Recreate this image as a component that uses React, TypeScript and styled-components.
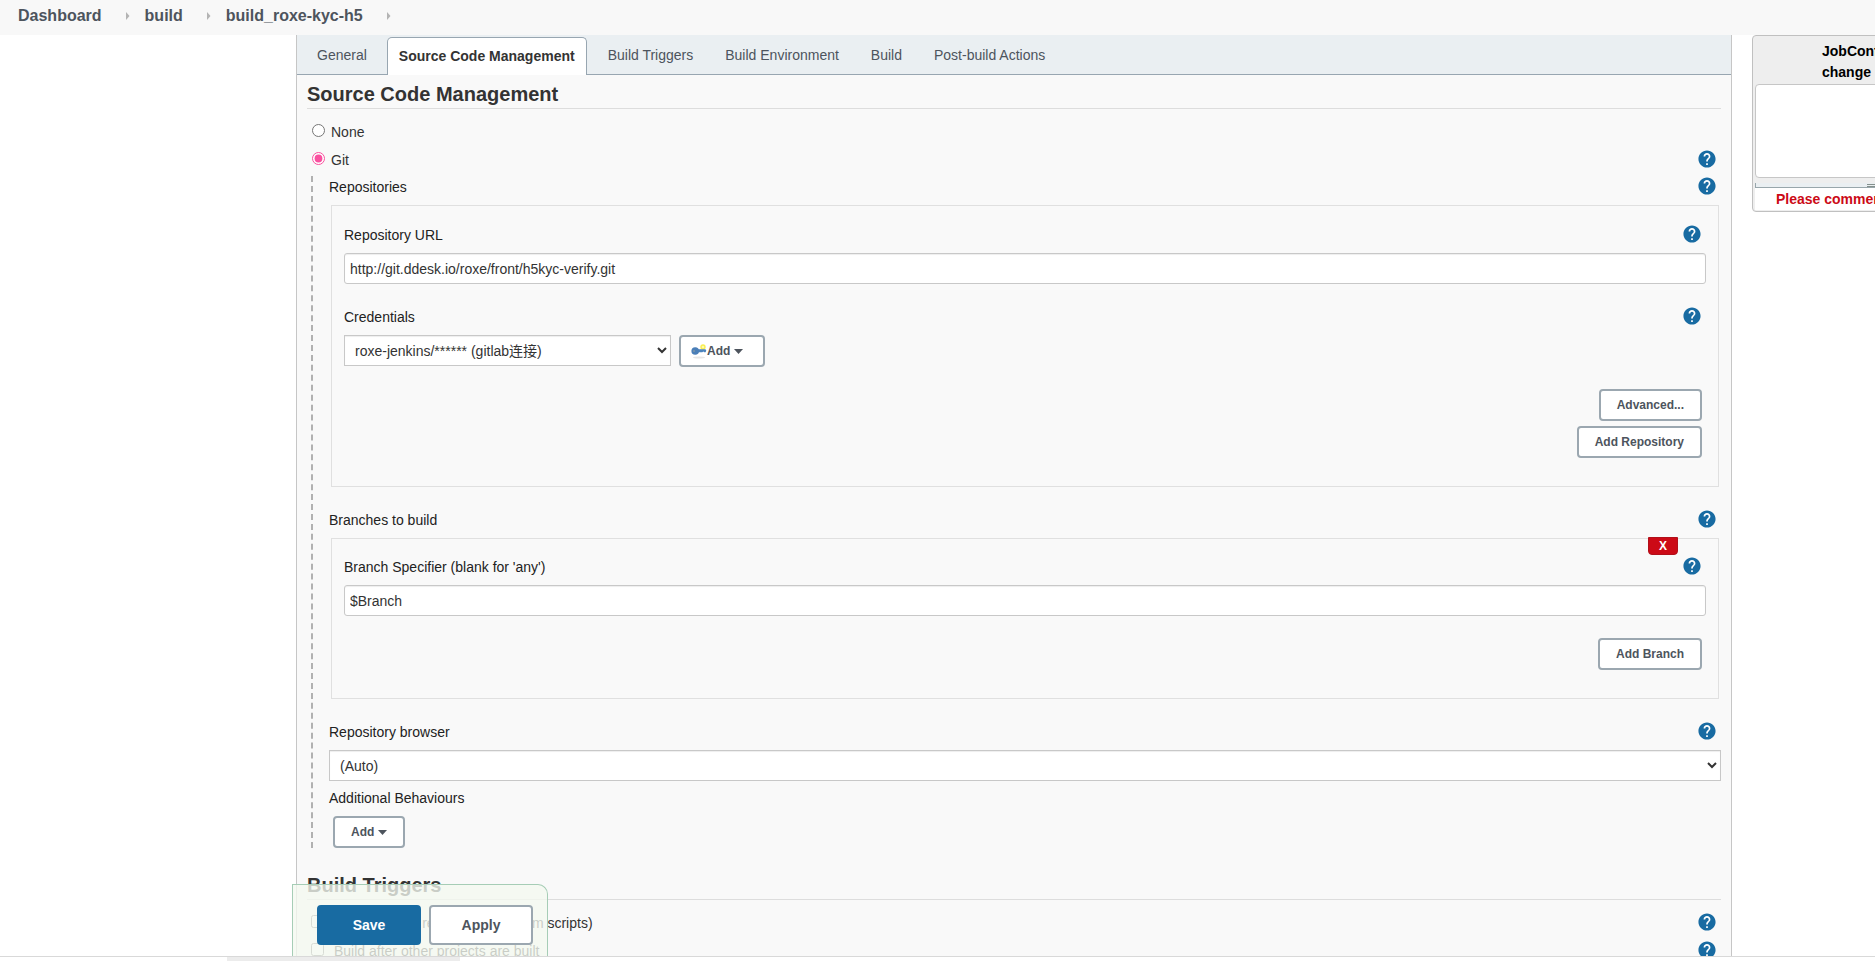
import React from "react";
import styled, { createGlobalStyle } from "styled-components";

const GlobalStyle = createGlobalStyle`
  * { box-sizing: border-box; }
  body {
    margin: 0;
    background: #fff;
    color: #333;
    font: 14px/22px "Liberation Sans", Arial, "Noto Sans CJK SC", sans-serif;
  }
  button, input, select, textarea { font: inherit; color: inherit; margin: 0; }
`;

const Page = styled.div`
  display: flex;
  flex-direction: column;
  height: 100vh;
  overflow: hidden;
`;

const Breadcrumbs = styled.nav`
  display: flex;
  align-items: center;
  flex: none;
  height: 35px;
  padding: 0 18px 4px;
  background: #f8f8f8;
`;

const Crumb = styled.a`
  color: #4d545d;
  font-size: 16px;
  font-weight: bold;
  text-decoration: none;
`;

const CrumbArrow = styled.svg`
  width: 5px;
  height: 8px;
  margin: 0 15px 0 23px;
  fill: #b4b4b4;
`;

const Main = styled.main`
  position: relative;
  display: grid;
  grid-template-columns: 296px minmax(0, 1fr) 143px;
  flex: 1;
  min-height: 0;
  overflow: hidden;
`;

const Panel = styled.form`
  grid-column: 2;
  border: solid #c6c6c6;
  border-width: 0 1px;
  background: #f9f9f9;
`;

const Tabs = styled.div`
  display: flex;
  height: 40px;
  padding: 2px 4px 0;
  border-bottom: 1px solid #98a6b1;
  background: #eaeff2;
`;

const Tab = styled.button<{ $active?: boolean }>`
  height: ${(p) => (p.$active ? 38 : 37)}px;
  margin: ${(p) => (p.$active ? "0 5px 0 4px" : "0")};
  padding: ${(p) => (p.$active ? "0 11px 2px" : "0 16px 2px")};
  border: ${(p) => (p.$active ? "1px solid #98a6b1" : "0")};
  border-bottom: 0;
  border-radius: 5px 5px 0 0;
  background: ${(p) => (p.$active ? "#fff" : "transparent")};
  color: ${(p) => (p.$active ? "#333" : "#4d545d")};
  font-weight: ${(p) => (p.$active ? "bold" : "normal")};
  white-space: nowrap;
`;

const Content = styled.div`
  padding: 0 10px;
`;

const SectionTitle = styled.h2`
  margin: 0 0 9px;
  padding-top: 6px;
  border-bottom: 1px solid #ddd;
  font-size: 20px;
  line-height: 27px;
`;

const OptionRow = styled.div`
  display: flex;
  align-items: center;
  justify-content: space-between;
  height: 28px;
  padding: 0 5px 0 4px;
`;

const OptionLabel = styled.label<{ $radio?: boolean }>`
  display: flex;
  align-items: center;
  gap: ${(p) => (p.$radio ? 6 : 10)}px;
  padding-left: ${(p) => (p.$radio ? 1 : 0)}px;
`;

const Choice = styled.input`
  width: 13px;
  height: 13px;
  margin-bottom: 3px;
  accent-color: #f9509f;
`;

const Nested = styled.div`
  margin: 2px 0 18px 4px;
  padding-left: 16px;
  border-left: 2px dashed #b1b1b1;
`;

const LabelRow = styled.div`
  display: flex;
  justify-content: space-between;
  height: 22px;
  margin-bottom: 7px;
  padding-right: 5px;
`;

const FieldLabel = styled.label`
  color: #222;
`;

const HelpButton = styled.button`
  display: block;
  width: 18px;
  height: 18px;
  margin: 1px 0 3px;
  padding: 0;
  border: 0;
  background: none;
  color: #186ba2;
`;

const Group = styled.section<{ $top: number }>`
  position: relative;
  margin: 0 2px 22px;
  padding: ${(p) => p.$top}px 12px 28px;
  border: 1px solid #e0e0e0;
`;

const Field = styled.div`
  margin-bottom: 22px;
`;

const TextInput = styled.input`
  display: block;
  width: 100%;
  height: 31px;
  padding: 0 5px;
  border: 1px solid #c8c8c8;
  border-radius: 3px;
  background: #fff;
  box-shadow: inset 0 1px 1px #eee;
`;

const Select = styled.select<{ $width: string }>`
  width: ${(p) => p.$width};
  height: 31px;
  padding: 0 0 0 6px;
  border: 1px solid #c8c8c8;
  border-radius: 0;
  background: #fff;
  box-shadow: inset 0 1px 1px #eee;
`;

const Inline = styled.div`
  display: flex;
  gap: 8px;
`;

const Actions = styled.div`
  display: flex;
  flex-direction: column;
  align-items: flex-end;
  gap: 5px;
  padding-right: 4px;
`;

const Button = styled.button<{ $withIcon?: boolean }>`
  display: inline-flex;
  align-items: center;
  height: 32px;
  padding: ${(p) => (p.$withIcon ? "0 20px 0 10px" : "0 16px")};
  border: 2px solid #9ba7b0;
  border-radius: 4px;
  background: #fff;
  color: #4d545d;
  font-size: 12px;
  font-weight: bold;
`;

const Behaviours = styled.div`
  margin-top: 6px;
`;

const BehaviourAction = styled.div`
  display: flex;
  padding-left: 4px;
`;

const Caret = styled.svg`
  width: 9px;
  height: 5px;
  margin-left: 4px;
  fill: currentColor;
`;

const KeyIcon = styled.svg`
  width: 16px;
  height: 16px;
`;

const DeleteButton = styled.button`
  position: absolute;
  top: -2px;
  right: 40px;
  width: 30px;
  height: 18px;
  padding: 0;
  border: 1px solid #b1101a;
  border-radius: 0 0 4px 4px;
  background: #cc0a16;
  color: #fff;
  font-size: 12px;
  font-weight: bold;
  line-height: 16px;
`;

const SaveBar = styled.div`
  position: absolute;
  bottom: 0;
  left: 292px;
  display: flex;
  gap: 8px;
  padding: 20px 14px 11px 24px;
  border: 1px solid #a6cdb6;
  border-bottom: 0;
  border-radius: 0 10px 0 0;
  background: rgba(244, 248, 240, 0.78);
`;

const FormButton = styled.button<{ $primary?: boolean }>`
  width: 104px;
  height: 40px;
  border: 2px solid ${(p) => (p.$primary ? "#186ba2" : "#9ba7b0")};
  border-radius: 4px;
  background: ${(p) => (p.$primary ? "#186ba2" : "#fff")};
  color: ${(p) => (p.$primary ? "#fff" : "#4d545d")};
  font-weight: bold;
`;

const HistoryBox = styled.aside`
  width: 260px;
  height: 177px;
  margin-left: 20px;
  padding: 5px 2px 2px;
  border: 1px solid #c0c0c0;
  border-radius: 4px;
  background: #eee;
`;

const HistoryLabel = styled.label`
  display: block;
  padding-left: 67px;
  color: #000;
  font-weight: bold;
  line-height: 21px;
`;

const HistoryText = styled.textarea`
  display: block;
  width: 100%;
  height: 94px;
  margin-top: 1px;
  border: 1px solid #c6c6c6;
  border-radius: 4px;
  background: #fff;
  resize: none;
`;

const ResizeStrip = styled.div`
  display: flex;
  justify-content: center;
  height: 5px;
  margin-top: 5px;
  border: solid #98a6ab;
  border-width: 0 1px 1px;
  background: #eaeff2;
`;

const ResizeGrip = styled.div`
  width: 30px;
  height: 3px;
  margin-top: 1px;
  border: solid #84908c;
  border-width: 1px 0;
`;

const HistoryWarning = styled.strong`
  display: block;
  padding-left: 21px;
  background: #fff;
  color: #cc0a16;
`;

const ScrollTrack = styled.div`
  flex: none;
  height: 5px;
  padding-left: 227px;
  border-top: 1px solid #d9d9d9;
  background: #fff;
`;

const ScrollThumb = styled.div`
  width: 233px;
  height: 4px;
  background: #ececec;
`;

const tabs = [
  "General",
  "Source Code Management",
  "Build Triggers",
  "Build Environment",
  "Build",
  "Post-build Actions",
];

const crumbs = ["Dashboard", "build", "build_roxe-kyc-h5"];

const triggers = [
  "Trigger builds remotely (e.g., from scripts)",
  "Build after other projects are built",
];

function Help({ topic }: { topic: string }) {
  return (
    <HelpButton type="button" aria-label={`Help for ${topic}`}>
      <svg width="18" height="18" viewBox="1.5 1.5 21 21" fill="currentColor">
        <circle cx="12" cy="12" r="9" fill="#fff" />
        <path d="M12 2C6.48 2 2 6.48 2 12s4.48 10 10 10 10-4.48 10-10S17.52 2 12 2zm1 17h-2v-2h2v2zm2.07-7.75l-.9.92C13.45 12.9 13 13.5 13 15h-2v-.5c0-1.1.45-2.1 1.17-2.83l1.24-1.26c.37-.36.59-.86.59-1.41 0-1.1-.9-2-2-2s-2 .9-2 2H8c0-2.21 1.79-4 4-4s4 1.79 4 4c0 .88-.36 1.68-.93 2.25z" />
      </svg>
    </HelpButton>
  );
}

function DownCaret() {
  return (
    <Caret viewBox="0 0 9 5">
      <path d="M0 0h9L4.5 5z" />
    </Caret>
  );
}

function Label({ text, id, help = true }: { text: string; id?: string; help?: boolean }) {
  return (
    <LabelRow>
      <FieldLabel as={id ? "label" : "span"} htmlFor={id}>
        {text}
      </FieldLabel>
      {help && <Help topic={text} />}
    </LabelRow>
  );
}

export default function App() {
  return (
    <Page>
      <GlobalStyle />
      <Breadcrumbs>
        {crumbs.map((name) => (
          <React.Fragment key={name}>
            <Crumb href="#">{name}</Crumb>
            <CrumbArrow viewBox="0 0 5 8">
              <path d="M1 0l3.5 4L1 8z" />
            </CrumbArrow>
          </React.Fragment>
        ))}
      </Breadcrumbs>
      <Main>
        <Panel onSubmit={(e) => e.preventDefault()}>
          <Tabs>
            {tabs.map((name, i) => (
              <Tab key={name} type="button" $active={i === 1}>
                {name}
              </Tab>
            ))}
          </Tabs>
          <Content>
            <SectionTitle>Source Code Management</SectionTitle>
            <OptionRow>
              <OptionLabel $radio>
                <Choice type="radio" name="scm" />
                None
              </OptionLabel>
            </OptionRow>
            <OptionRow>
              <OptionLabel $radio>
                <Choice type="radio" name="scm" defaultChecked />
                Git
              </OptionLabel>
              <Help topic="Git" />
            </OptionRow>
            <Nested>
              <Label text="Repositories" />
              <Group $top={18}>
                <Field>
                  <Label text="Repository URL" id="repo-url" />
                  <TextInput id="repo-url" defaultValue="http://git.ddesk.io/roxe/front/h5kyc-verify.git" />
                </Field>
                <Field>
                  <Label text="Credentials" id="credentials" />
                  <Inline>
                    <Select id="credentials" $width="327px">
                      <option>roxe-jenkins/****** (gitlab连接)</option>
                    </Select>
                    <Button type="button" $withIcon>
                      <KeyIcon viewBox="0 0 16 16">
                        <ellipse cx="8" cy="14.5" rx="6" ry="1" fill="#e6e6e6" />
                        <circle cx="12" cy="4" r="2" fill="#fdf9b0" stroke="#f9ee4f" strokeWidth="1.4" />
                        <path d="M7 6.3h7.5l.8 1.4-.8 1.6h-1.2l-1-.7-1 .7H7z" fill="#4b83bd" />
                        <circle cx="4.2" cy="8" r="3.8" fill="#4b7fb8" />
                        <circle cx="3" cy="8" r="1" fill="#7d94a6" />
                      </KeyIcon>
                      Add
                      <DownCaret />
                    </Button>
                  </Inline>
                </Field>
                <Actions>
                  <Button type="button">Advanced...</Button>
                  <Button type="button">Add Repository</Button>
                </Actions>
              </Group>
              <Label text="Branches to build" />
              <Group $top={17}>
                <DeleteButton type="button">X</DeleteButton>
                <Field>
                  <Label text="Branch Specifier (blank for 'any')" id="branch" />
                  <TextInput id="branch" defaultValue="$Branch" />
                </Field>
                <Actions>
                  <Button type="button">Add Branch</Button>
                </Actions>
              </Group>
              <Label text="Repository browser" id="browser" />
              <Inline>
                <Select id="browser" $width="100%">
                  <option>(Auto)</option>
                </Select>
              </Inline>
              <Behaviours>
                <Label text="Additional Behaviours" help={false} />
                <BehaviourAction>
                  <Button type="button">
                    Add
                    <DownCaret />
                  </Button>
                </BehaviourAction>
              </Behaviours>
            </Nested>
            <SectionTitle>Build Triggers</SectionTitle>
            {triggers.map((name) => (
              <OptionRow key={name}>
                <OptionLabel>
                  <Choice type="checkbox" />
                  {name}
                </OptionLabel>
                <Help topic={name} />
              </OptionRow>
            ))}
          </Content>
        </Panel>
        <HistoryBox>
          <HistoryLabel htmlFor="history">
            JobConfigHistory:
            <br />
            change message
          </HistoryLabel>
          <HistoryText id="history" />
          <ResizeStrip>
            <ResizeGrip />
          </ResizeStrip>
          <HistoryWarning>Please comment your change!</HistoryWarning>
        </HistoryBox>
        <SaveBar>
          <FormButton type="button" $primary>
            Save
          </FormButton>
          <FormButton type="button">Apply</FormButton>
        </SaveBar>
      </Main>
      <ScrollTrack>
        <ScrollThumb />
      </ScrollTrack>
    </Page>
  );
}
